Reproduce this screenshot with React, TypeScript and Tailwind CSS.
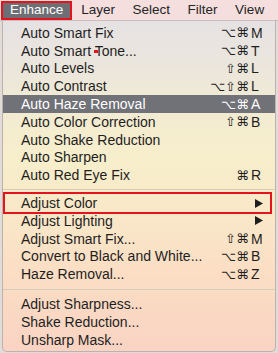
import { Fragment } from 'react';

type Item = { label: string; mods?: string; key?: string; sub?: boolean; active?: boolean; boxed?: boolean };

const groups: Item[][] = [
  [
    { label: 'Auto Smart Fix', mods: '⌥⌘', key: 'M' },
    { label: 'Auto Smart Tone...', mods: '⌥⌘', key: 'T' },
    { label: 'Auto Levels', mods: '⇧⌘', key: 'L' },
    { label: 'Auto Contrast', mods: '⌥⇧⌘', key: 'L' },
    { label: 'Auto Haze Removal', mods: '⌥⌘', key: 'A', active: true },
    { label: 'Auto Color Correction', mods: '⇧⌘', key: 'B' },
    { label: 'Auto Shake Reduction' },
    { label: 'Auto Sharpen' },
    { label: 'Auto Red Eye Fix', mods: '⌘', key: 'R' },
  ],
  [
    { label: 'Adjust Color', sub: true, boxed: true },
    { label: 'Adjust Lighting', sub: true },
    { label: 'Adjust Smart Fix...', mods: '⇧⌘', key: 'M' },
    { label: 'Convert to Black and White...', mods: '⌥⌘', key: 'B' },
    { label: 'Haze Removal...', mods: '⌥⌘', key: 'Z' },
  ],
  [
    { label: 'Adjust Sharpness...' },
    { label: 'Shake Reduction...' },
    { label: 'Unsharp Mask...' },
  ],
];

function Row({ item }: { item: Item }) {
  return (
    <div
      className={`relative flex items-center h-[17.8px] pl-[18px] pr-[12px] text-[14px] leading-none ${
        item.active ? 'bg-[#717178] text-white' : 'text-[#1e1e1e]'
      }`}
    >
      <span className="flex-1">{item.label}</span>
      {item.key && (
        <span className="flex items-center">
          <span className="font-['DejaVu_Sans',sans-serif] text-[13px]">{item.mods}</span>
          <span className="w-[14px] pl-[2px]">{item.key}</span>
        </span>
      )}
      {item.sub && (
        <svg width="8" height="9" viewBox="0 0 8 9" className="mr-[0px]">
          <path d="M0 0 L8 4.5 L0 9 Z" fill="#1e1e1e" />
        </svg>
      )}
      {item.boxed && (
        <span className="absolute left-0 right-[3px] top-[-2.5px] bottom-[-2px] border-2 border-[#e3141c]" />
      )}
    </div>
  );
}

export default function App() {
  return (
    <div className="relative w-[278px] h-[353px] overflow-hidden bg-[#e2dcd8] font-['Liberation_Sans',Arial,sans-serif]">
      {/* Menu bar */}
      <div className="flex items-center h-[21px] bg-[#f4dede] border-b border-[#c9bebe] text-[13.5px] text-[#252525]">
        <div className="ml-[1px] h-[19px] border-2 border-[#e3141c]">
          <div className="h-full flex items-center px-[7px] bg-[#6e6f75] text-white">Enhance</div>
        </div>
        <div className="flex items-center gap-[17.5px] ml-[9px]">
          <span>Layer</span>
          <span>Select</span>
          <span>Filter</span>
          <span>View</span>
        </div>
      </div>

      {/* Dropdown */}
      <div className="ml-[2px] w-[274px] h-[331px] pt-[3px] border-l border-r border-b border-[#bdb3ae] rounded-b-[5px] bg-[linear-gradient(to_bottom,#e6e2e3_0%,#ebe6dc_14%,#f4ecd0_31%,#f7eecb_42%,#f9e7c8_60%,#fbdec4_76%,#f9d3c3_100%)]">
        {groups.map((g, gi) => (
          <Fragment key={gi}>
            {gi > 0 && (
              <div className={`flex items-center ${gi === 1 ? 'h-[10px]' : 'h-[12px]'}`}>
                <div className="w-full h-px bg-[#d9ccbb]" />
              </div>
            )}
            {g.map((item) => (
              <Row key={item.label} item={item} />
            ))}
          </Fragment>
        ))}
      </div>

      {/* stray red mark over "Tone" */}
      <span className="absolute left-[94px] top-[50px] w-[4px] h-[3px] bg-[#e3141c]" />
    </div>
  );
}
